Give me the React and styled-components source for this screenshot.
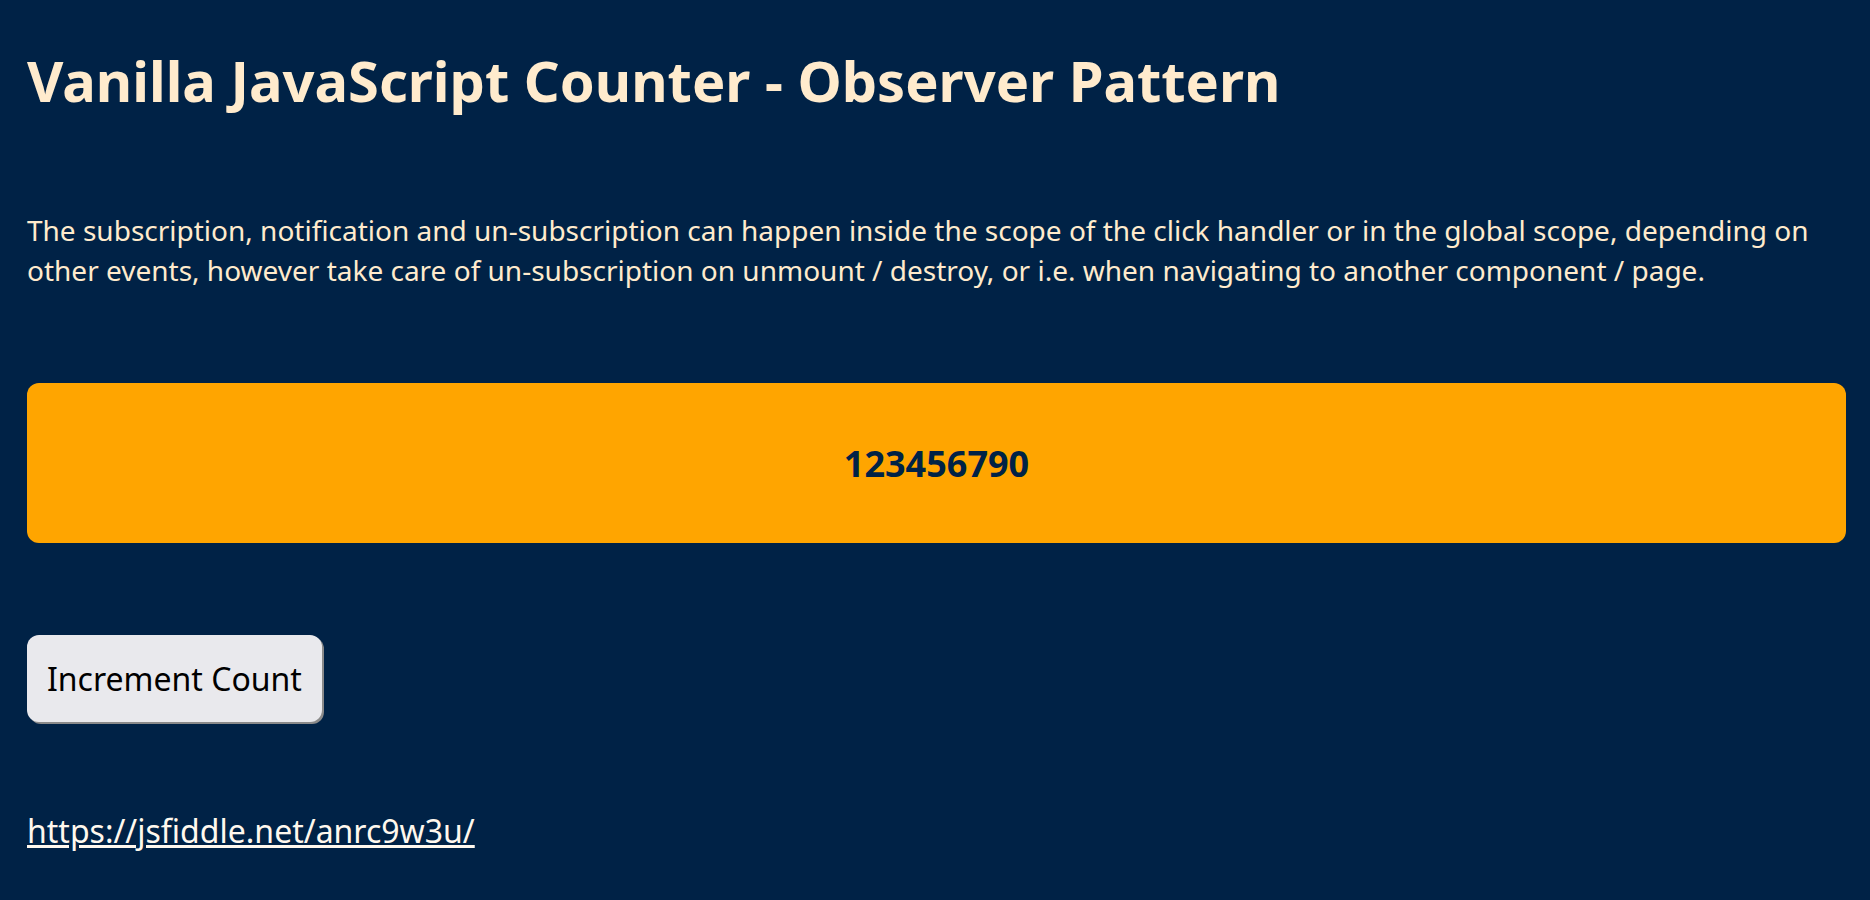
import React from "react";
import styled, { createGlobalStyle } from "styled-components";

const Global = createGlobalStyle`
  html, body { margin: 0; padding: 0; background: #002246; }
  body { font-family: "Noto Sans", "Open Sans", sans-serif; color: #ffebcd; }
`;

const Page = styled.main`
  display: flex;
  flex-direction: column;
  align-items: flex-start;
  padding: 28px 24px 40px 27px;
  min-height: 900px;
  box-sizing: border-box;
`;

const Title = styled.h1`
  margin: 19px 0 0;
  font-size: 56px;
  font-weight: 700;
  line-height: 67px;
  color: #ffebcd;
`;

const Text = styled.p`
  margin: 97px 0 0;
  font-size: 28px;
  line-height: 39.5px;
  color: #ffebcd;
`;

const Counter = styled.div`
  align-self: stretch;
  margin-top: 93px;
  height: 160px;
  display: flex;
  align-items: center;
  justify-content: center;
  background: #ffa500;
  border-radius: 12px;
  color: #002246;
  font-size: 36px;
  font-weight: 700;
`;

const Button = styled.button`
  margin-top: 92px;
  height: 87px;
  padding: 0 20px;
  font-family: "Noto Sans", "Open Sans", sans-serif;
  font-size: 32px;
  color: #000;
  background: #e9e9ed;
  border: none;
  border-radius: 12px;
  box-shadow: 2px 2px 0 #8a8a8a;
  cursor: pointer;
`;

const Link = styled.a`
  margin-top: 87px;
  font-size: 32px;
  color: #fff8ee;
  text-decoration: underline;
`;

export default function App() {
  return (
    <>
      <Global />
      <Page>
        <Title>Vanilla JavaScript Counter - Observer Pattern</Title>
        <Text>
          The subscription, notification and un-subscription can happen inside the scope of the click handler or in the global scope, depending on other events, however take care of un-subscription on unmount / destroy, or i.e. when navigating to another component / page.
        </Text>
        <Counter>123456790</Counter>
        <Button>Increment Count</Button>
        <Link href="https://jsfiddle.net/anrc9w3u/">https://jsfiddle.net/anrc9w3u/</Link>
      </Page>
    </>
  );
}
